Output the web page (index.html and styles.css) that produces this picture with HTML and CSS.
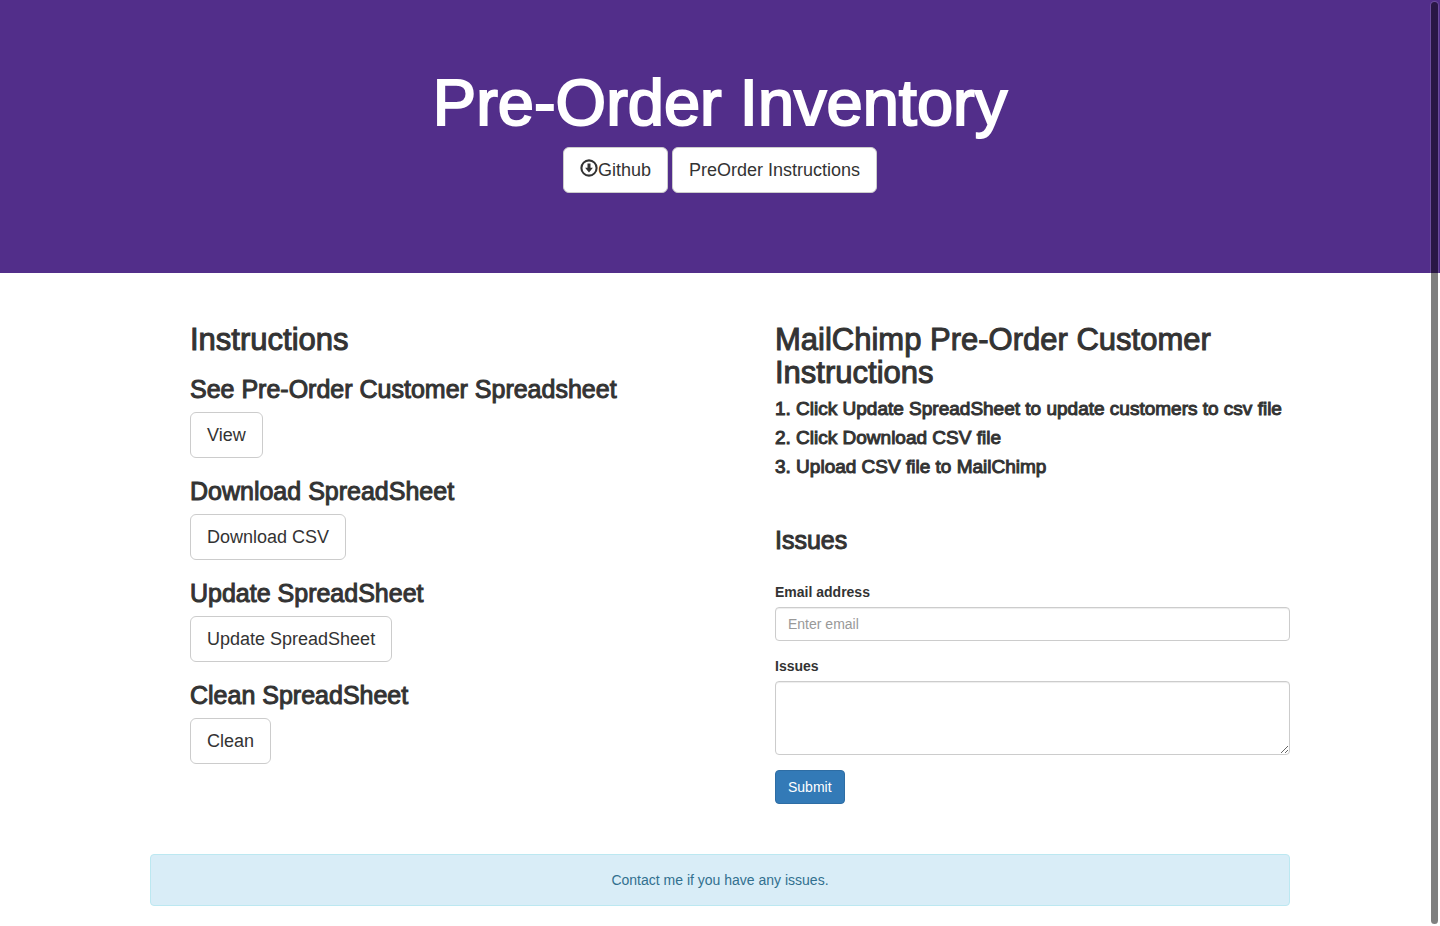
FILE: index.html
```html
<!DOCTYPE html>
<html lang="en">
<head>
<meta charset="utf-8">
<meta name="viewport" content="width=device-width, initial-scale=1">
<title>Pre-Order Inventory</title>
<link rel="stylesheet" href="styles.css">
</head>
<body>
<header class="hero">
  <h1 class="hero-title">Pre-Order Inventory</h1>
  <nav class="hero-actions">
    <a class="btn btn-lg" href="#"><svg class="icon" viewBox="0 0 18 18" aria-hidden="true"><circle cx="9" cy="9" r="7.6" fill="none" stroke="currentColor" stroke-width="2.1"/><path d="M7.500 4.500h3v4.300h2.400L9 13.500 5.100 8.800h2.400z" fill="currentColor"/></svg>Github</a>
    <a class="btn btn-lg" href="#">PreOrder Instructions</a>
  </nav>
</header>
<main class="container">
  <div class="columns">
    <section class="column">
      <h2 class="title">Instructions</h2>
      <div class="task">
        <h3 class="subtitle">See Pre-Order Customer Spreadsheet</h3>
        <button class="btn btn-lg" type="button">View</button>
      </div>
      <div class="task">
        <h3 class="subtitle">Download SpreadSheet</h3>
        <button class="btn btn-lg" type="button">Download CSV</button>
      </div>
      <div class="task">
        <h3 class="subtitle">Update SpreadSheet</h3>
        <button class="btn btn-lg" type="button">Update SpreadSheet</button>
      </div>
      <div class="task">
        <h3 class="subtitle">Clean SpreadSheet</h3>
        <button class="btn btn-lg" type="button">Clean</button>
      </div>
    </section>
    <section class="column">
      <h2 class="title">MailChimp Pre-Order Customer Instructions</h2>
      <div class="steps">
        <h4 class="step">1. Click Update SpreadSheet to update customers to csv file</h4>
        <h4 class="step">2. Click Download CSV file</h4>
        <h4 class="step">3. Upload CSV file to MailChimp</h4>
      </div>
      <h3 class="subtitle">Issues</h3>
      <form class="issue-form">
        <div class="field">
          <label class="label" for="email">Email address</label>
          <input class="control" id="email" type="email" placeholder="Enter email">
        </div>
        <div class="field">
          <label class="label" for="issues">Issues</label>
          <textarea class="control control-area" id="issues" rows="3"></textarea>
        </div>
        <button class="btn btn-primary" type="submit">Submit</button>
      </form>
    </section>
  </div>
  <p class="alert">Contact me if you have any issues.</p>
</main>
<div class="scrollbar" aria-hidden="true"></div>
</body>
</html>
```

FILE: styles.css
```css
* {
  box-sizing: border-box;
}

body {
  margin: 0;
  background: #fff;
  color: #333;
  font: 14px/20px "Liberation Sans", Arial, sans-serif;
}

h1, h2, h3, h4, p {
  margin: 0;
}

.hero {
  padding: 68px 16px 80px;
  background: #522e8a;
  text-align: center;
}

.hero-title {
  margin-bottom: 9px;
  color: #fff;
  font-size: 65px;
  font-weight: 400;
  line-height: 70px;
  -webkit-text-stroke: 2px currentColor;
}

.hero-actions {
  display: flex;
  flex-wrap: wrap;
  justify-content: center;
  gap: 4px;
}

.btn {
  display: inline-flex;
  align-items: center;
  justify-content: center;
  padding: 6px 12px;
  border: 1px solid #ccc;
  border-radius: 4px;
  background: #fff;
  color: #333;
  font: inherit;
  text-decoration: none;
  cursor: pointer;
}

.btn-lg {
  padding: 10px 16px;
  border-radius: 6px;
  font-size: 18px;
  line-height: 24px;
}

.btn-primary {
  border-color: #2e6da4;
  background: #337ab7;
  color: #fff;
}

.icon {
  width: 18px;
  height: 18px;
  margin-bottom: 4px;
}

.container {
  max-width: 1170px;
  margin: 0 auto;
  padding: 50px 15px 20px;
}

.columns {
  display: grid;
  grid-template-columns: 1fr 1fr;
  gap: 30px;
  margin-bottom: 50px;
}

.column {
  padding-left: 40px;
}

.title {
  font-size: 31px;
  font-weight: 400;
  line-height: 33px;
  -webkit-text-stroke: 1px currentColor;
}

.subtitle {
  font-size: 25px;
  font-weight: 400;
  line-height: 26px;
  -webkit-text-stroke: 1px currentColor;
}

.task {
  display: flex;
  flex-direction: column;
  align-items: flex-start;
  gap: 10px;
  margin-top: 20px;
}

.steps {
  display: grid;
  gap: 9px;
  margin: 10px 0 50px;
}

.step {
  font-size: 19px;
  font-weight: 400;
  line-height: 20px;
  -webkit-text-stroke: 1px currentColor;
}

.issue-form {
  margin-top: 29px;
}

.field {
  display: flex;
  flex-direction: column;
  gap: 5px;
  margin-bottom: 15px;
}

.label {
  font-weight: 700;
}

.control {
  width: 100%;
  height: 34px;
  padding: 6px 12px;
  border: 1px solid #ccc;
  border-radius: 4px;
  background: #fff;
  box-shadow: inset 0 1px 1px rgba(0, 0, 0, 0.075);
  color: #555;
  font: inherit;
}

.control::placeholder {
  color: #999;
}

.control-area {
  height: 74px;
  resize: vertical;
}

.alert {
  padding: 15px;
  border: 1px solid #bce8f1;
  border-radius: 4px;
  background: #d9edf7;
  color: #31708f;
  text-align: center;
}

.scrollbar {
  position: fixed;
  top: 2px;
  right: 2px;
  bottom: 2px;
  width: 7px;
  border-radius: 4px;
  background: rgba(0, 0, 0, 0.5);
  box-shadow: 0 0 0 1px rgba(255, 255, 255, 0.15);
}
```
